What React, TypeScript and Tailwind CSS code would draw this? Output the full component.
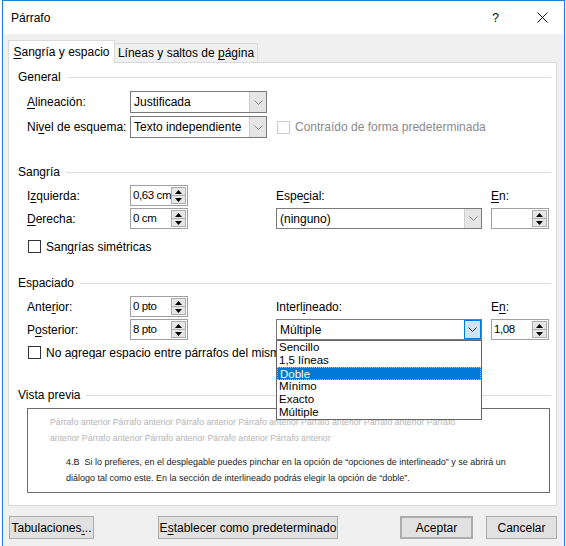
import React from "react"

const U = ({ children }: { children: React.ReactNode }) => (
  <span className="underline underline-offset-[2px] decoration-[1px]">{children}</span>
)

function Heading({ title, className = "" }: { title: string; className?: string }) {
  return (
    <div className={`flex items-center h-[16px] pr-[5px] ${className}`}>
      <span>{title}</span>
      <div className="flex-1 h-px bg-[#dcdcdc] ml-[6px] mt-[1px]" />
    </div>
  )
}

function Chevron({ dark }: { dark?: boolean }) {
  return (
    <svg width="9" height="5" viewBox="0 0 9 5">
      <polyline points="0.5,0.5 4.5,4.5 8.5,0.5" fill="none" stroke={dark ? "#333" : "#888"} strokeWidth="1" />
    </svg>
  )
}

function Select({ value, className = "", focused }: { value: string; className?: string; focused?: boolean }) {
  return (
    <div className={`flex border bg-white border-[#7a7a7a] ${className}`}>
      <div className="flex-1 pl-[3px] flex items-center whitespace-nowrap overflow-hidden">{value}</div>
      <div
        className={`w-[17px] flex items-center justify-center ${
          focused ? "bg-[#cce4f7] border border-[#0078d7]" : "bg-[#e5e5e5] border-l border-[#cfcfcf]"
        }`}
      >
        <Chevron dark={focused} />
      </div>
    </div>
  )
}

function Tri({ up }: { up?: boolean }) {
  return (
    <svg width="7" height="4" viewBox="0 0 7 4">
      <polygon points={up ? "0,4 7,4 3.5,0" : "0,0 7,0 3.5,4"} fill="#000" />
    </svg>
  )
}

function Spin({ value }: { value: string }) {
  return (
    <div className="flex h-[21px] w-[58px] border border-[#a0a0a0] bg-white">
      <div className="w-[40px] pl-[2px] flex items-center whitespace-nowrap text-[11.5px] tracking-[-0.4px]">
        {value}
      </div>
      <div className="w-[15px] ml-auto flex flex-col my-[1px] mr-[1px]">
        <div className="flex-1 bg-[#e6e6e6] border border-[#adadad] flex items-center justify-center">
          <Tri up />
        </div>
        <div className="flex-1 bg-[#e6e6e6] border border-[#adadad] border-t-0 flex items-center justify-center">
          <Tri />
        </div>
      </div>
    </div>
  )
}

function Check({ label, disabled }: { label: React.ReactNode; disabled?: boolean }) {
  return (
    <div className="flex items-center h-[13px] whitespace-nowrap">
      <div className={`w-[13px] h-[13px] shrink-0 border bg-white ${disabled ? "border-[#cccccc]" : "border-[#333333]"}`} />
      <span className={`ml-[5px] ${disabled ? "text-[#8a8a8a]" : ""}`}>{label}</span>
    </div>
  )
}

function Btn({ children, className = "" }: { children: React.ReactNode; className?: string }) {
  return (
    <div className={`h-[23px] flex items-center justify-center bg-[#e1e1e1] border border-[#adadad] ${className}`}>
      {children}
    </div>
  )
}

const spacingOptions = ["Sencillo", "1,5 líneas", "Doble", "Mínimo", "Exacto", "Múltiple"]

export default function App() {
  return (
    <div
      className="w-[566px] h-[546px] bg-white flex pl-[2px] pr-[1px] text-[12px] text-black overflow-hidden"
      style={{ fontFamily: '"Liberation Sans", Arial, sans-serif' }}
    >
      <div className="flex-1 border-l border-r border-t border-[#1883d7] flex flex-col">
        {/* title bar */}
        <div className="h-[33px] bg-white flex items-center pl-[8px]">
          <span>Párrafo</span>
          <span className="ml-auto mr-[38px]">?</span>
          <svg width="11" height="11" viewBox="0 0 11 11" className="mr-[16px]">
            <path d="M0.5 0.5 L10.5 10.5 M10.5 0.5 L0.5 10.5" stroke="#111" strokeWidth="1" />
          </svg>
        </div>

        {/* body */}
        <div className="flex-1 bg-[#f0f0f0] pl-[5px] pr-[7px] pt-[6px] flex flex-col">
          {/* tabs */}
          <div className="flex items-end -mb-px relative z-10">
            <div className="h-[23px] w-[107px] bg-white border border-b-0 border-[#d9d9d9] flex items-center justify-center pb-[1px]">
              <span>
                <U>S</U>angría y espacio
              </span>
            </div>
            <div className="h-[20px] w-[143px] bg-[#f0f0f0] border border-l-0 border-[#d9d9d9] flex items-center justify-center">
              <span>
                Líneas y saltos de <U>p</U>ágina
              </span>
            </div>
          </div>

          {/* panel */}
          <div className="h-[444px] bg-white border border-[#d9d9d9] pl-[9px] flex flex-col">
            <Heading title="General" className="mt-[6px]" />
            <div className="pl-[9px] mt-[6px] flex flex-col gap-[3px]">
              <div className="flex items-center">
                <span className="w-[103px]">
                  <U>A</U>lineación:
                </span>
                <Select value="Justificada" className="w-[137px] h-[22px]" />
              </div>
              <div className="flex items-center">
                <span className="w-[103px]">
                  Ni<U>v</U>el de esquema:
                </span>
                <Select value="Texto independiente" className="w-[137px] h-[22px]" />
                <div className="ml-[10px]">
                  <Check label="Contraído de forma predeterminada" disabled />
                </div>
              </div>
            </div>

            <Heading title="Sangría" className="mt-[26px]" />
            <div className="pl-[9px] mt-[5px] flex">
              <div className="w-[249px] flex flex-col gap-[2px]">
                <div className="flex items-center h-[21px]">
                  <span className="w-[103px]">
                    I<U>z</U>quierda:
                  </span>
                  <Spin value="0,63 cm" />
                </div>
                <div className="flex items-center h-[21px]">
                  <span className="w-[103px]">
                    <U>D</U>erecha:
                  </span>
                  <Spin value="0 cm" />
                </div>
              </div>
              <div className="w-[206px] flex flex-col gap-[2px]">
                <div className="h-[21px] flex items-center">
                  <span>
                    Espe<U>c</U>ial:
                  </span>
                </div>
                <Select value="(ninguno)" className="w-[206px] h-[21px]" />
              </div>
              <div className="ml-[9px] flex flex-col gap-[2px]">
                <div className="h-[21px] flex items-center">
                  <span>
                    <U>E</U>n:
                  </span>
                </div>
                <Spin value="" />
              </div>
            </div>
            <div className="pl-[10px] mt-[11px]">
              <Check
                label={
                  <>
                    San<U>g</U>rías simétricas
                  </>
                }
              />
            </div>

            <Heading title="Espaciado" className="mt-[22px]" />
            <div className="pl-[9px] mt-[5px] flex">
              <div className="w-[249px] flex flex-col gap-[2px]">
                <div className="flex items-center h-[21px]">
                  <span className="w-[103px]">
                    Ante<U>r</U>ior:
                  </span>
                  <Spin value="0 pto" />
                </div>
                <div className="flex items-center h-[21px]">
                  <span className="w-[103px]">
                    P<U>o</U>sterior:
                  </span>
                  <Spin value="8 pto" />
                </div>
              </div>
              <div className="w-[206px] flex flex-col gap-[2px] relative z-20">
                <div className="h-[21px] flex items-center">
                  <span>
                    Interl<U>i</U>neado:
                  </span>
                </div>
                <div className="relative">
                  <Select value="Múltiple" className="w-[206px] h-[21px]" focused />
                  <div className="absolute top-full left-0 w-[206px] bg-white border border-[#646464] flex flex-col">
                    {spacingOptions.map((o) => (
                      <div
                        key={o}
                        className={`h-[13px] text-[11.5px] leading-[13px] pl-[2px] overflow-hidden ${
                          o === "Doble"
                            ? "bg-[#0078d7] text-white border border-dotted border-[#f0b060] pl-[1px] leading-[11px]"
                            : ""
                        }`}
                      >
                        {o}
                      </div>
                    ))}
                  </div>
                </div>
              </div>
              <div className="ml-[9px] flex flex-col gap-[2px]">
                <div className="h-[21px] flex items-center">
                  <span>
                    E<U>n</U>:
                  </span>
                </div>
                <Spin value="1,08" />
              </div>
            </div>
            <div className="ml-[10px] mt-[6px] w-[248px] overflow-hidden">
              <Check
                label={
                  <>
                    No agregar espacio entre párrafos del <U>m</U>ismo estilo
                  </>
                }
              />
            </div>

            <Heading title="Vista previa" className="mt-[28px]" />
            <div className="ml-[9px] mr-[6px] mt-[5px] h-[85px] border border-[#6d6d6d] bg-white pl-[22px] pt-[5px] overflow-hidden">
              <div className="text-[8.7px] text-[#b4b4b4] leading-[16px] whitespace-nowrap">
                <div>
                  Párrafo anterior Párrafo anterior Párrafo anterior Párrafo anterior Párrafo anterior Párrafo anterior
                  Párrafo
                </div>
                <div>anterior Párrafo anterior Párrafo anterior Párrafo anterior Párrafo anterior</div>
              </div>
              <div className="text-[9px] text-[#1a1a1a] leading-[16px] whitespace-nowrap pl-[16px] mt-[8px]">
                <div>
                  4.B&nbsp;&nbsp;Si lo prefieres, en el desplegable puedes pinchar en la opción de “opciones de
                  interlineado” y se abrirá un
                </div>
                <div>diálogo tal como este. En la sección de interlineado podrás elegir la opción de “doble”.</div>
              </div>
            </div>
          </div>

          {/* buttons */}
          <div className="flex mt-[10px]">
            <Btn className="w-[85px] ml-[1px]">
              Tabulaciones<U>.</U>..
            </Btn>
            <Btn className="w-[180px] ml-[64px]">
              E<U>s</U>tablecer como predeterminado
            </Btn>
            <Btn className="w-[73px] ml-[62px] border-2 border-[#0078d7]">Aceptar</Btn>
            <Btn className="w-[71px] ml-[13px]">Cancelar</Btn>
          </div>
        </div>
      </div>
    </div>
  )
}
